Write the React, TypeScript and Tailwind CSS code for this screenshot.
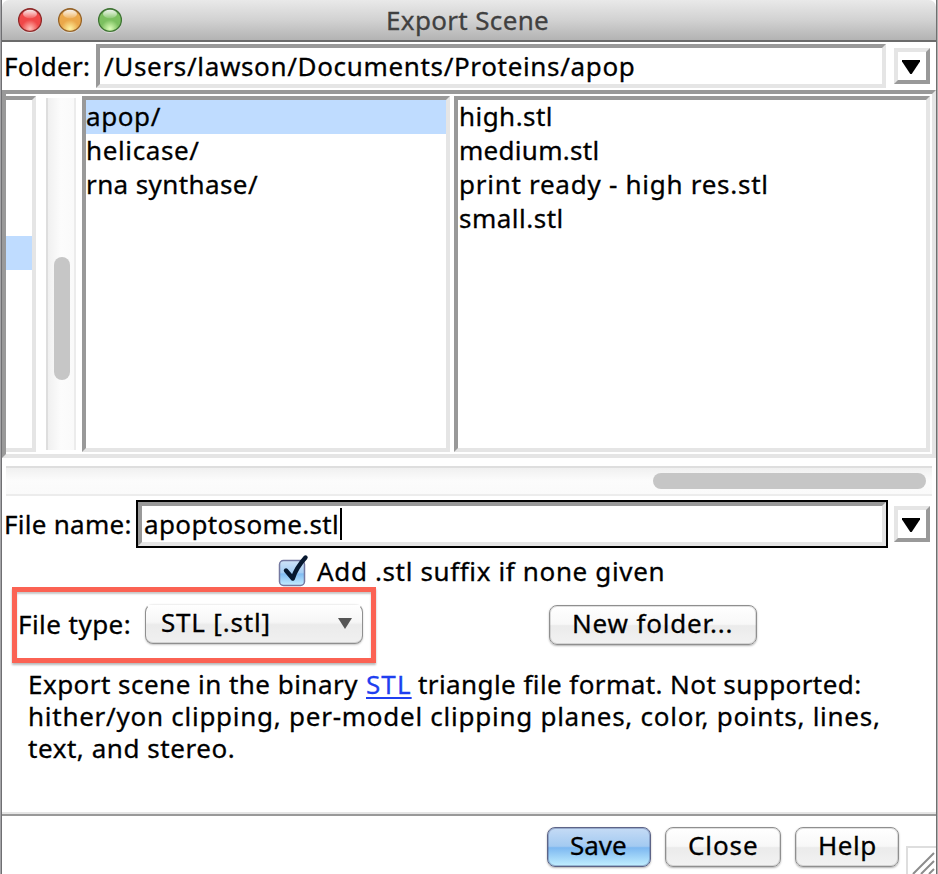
import type { ReactNode } from "react";

const sunken = "border-4 border-t-[#999] border-l-[#999] border-r-[#e5e5e5] border-b-[#e5e5e5] bg-white";

function Light({ id, dark, mid, glow }: { id: string; dark: string; mid: string; glow: string }) {
  return (
    <svg width="26" height="26" viewBox="0 0 26 26">
      <defs>
        <radialGradient id={id} cx="50%" cy="88%" r="85%">
          <stop offset="0" stopColor={glow} />
          <stop offset="0.45" stopColor={mid} />
          <stop offset="0.85" stopColor={mid} />
          <stop offset="1" stopColor={dark} />
        </radialGradient>
        <linearGradient id={id + "s"} x1="0" y1="0" x2="0" y2="1">
          <stop offset="0" stopColor="#fff" stopOpacity="0.9" />
          <stop offset="1" stopColor="#fff" stopOpacity="0.15" />
        </linearGradient>
      </defs>
      <circle cx="13" cy="14" r="12" fill="#fff" opacity="0.4" />
      <circle cx="13" cy="13" r="11.4" fill={`url(#${id})`} stroke={dark} strokeWidth="1.3" />
      <ellipse cx="13" cy="7" rx="7" ry="4.2" fill={`url(#${id}s)`} />
    </svg>
  );
}

function ArrowButton({ className }: { className: string }) {
  return (
    <button
      className={
        "flex h-9 w-9 shrink-0 items-start border-4 border-t-[#e5e5e5] border-l-[#e5e5e5] border-r-[#999] border-b-[#999] bg-white pt-2 pl-1 " +
        className
      }
    >
      <svg width="18" height="14" viewBox="0 0 18 14" className="shrink-0">
        <path d="M0 0H18V1.5L9.7 14H8.3L0 1.5Z" fill="#000" />
      </svg>
    </button>
  );
}

function Row({ children, className = "" }: { children?: ReactNode; className?: string }) {
  return <div className={"h-[34px] leading-[32px] whitespace-pre " + className}>{children}</div>;
}

function PushButton({ children, className }: { children: ReactNode; className: string }) {
  return (
    <button
      className={
        "shrink-0 rounded-[8px] border text-left leading-[33px] whitespace-pre pb-[3px] " + className
      }
    >
      {children}
    </button>
  );
}

const plain =
  "border-[#8f8f8f] bg-[linear-gradient(#ffffff_0%,#f8f8f8_48%,#ebebeb_52%,#f2f2f2_100%)] shadow-[inset_0_0_0_1px_rgba(0,0,0,0.12),0_1px_2px_rgba(0,0,0,0.3)]";

export default function App() {
  return (
    <div className="flex h-[874px] w-[938px] overflow-hidden bg-white font-['Noto_Sans',sans-serif] text-[26px] text-black [-webkit-text-stroke:0.3px]">
      <div className="w-[2px] shrink-0 bg-[linear-gradient(90deg,#a5a5a8_50%,#6f6f72_50%)]" />

      <div className="flex w-[934px] shrink-0 flex-col">
        <header className="flex h-[42px] shrink-0 rounded-t-[7px] border-b-2 border-[#6b6b6b] bg-[linear-gradient(#e9e9e9,#d2d2d2_50%,#b3b3b3)] pt-[7px] pl-[15px]">
          <div className="flex w-[369px] shrink-0 gap-[14px]">
            <Light id="red" dark="#8f2a2a" mid="#f04848" glow="#ffc0b8" />
            <Light id="amber" dark="#96642a" mid="#eba84a" glow="#fff3a0" />
            <Light id="green" dark="#3f7434" mid="#7cc060" glow="#dcffb8" />
          </div>
          <h1 className="-mt-px leading-[28px] tracking-[0.34px] text-[#404040]">Export Scene</h1>
        </header>

        <div className="flex h-12 shrink-0">
          <label className="w-[94px] shrink-0 pl-[2px] leading-[49px] tracking-[0.28px]">Folder:</label>
          <div className={"mt-[2px] h-11 w-[790px] shrink-0 pl-1 leading-[37px] tracking-[0.66px] " + sunken}>
            /Users/lawson/Documents/Proteins/apop
          </div>
          <ArrowButton className="mt-[6px] ml-2" />
        </div>

        <section className={"flex h-[368px] w-full shrink-0 pt-[2px] " + sunken}>
          <div className="h-[356px] w-[30px] shrink-0 border-y-4 border-r-4 border-t-[#999] border-r-[#e5e5e5] border-b-[#e5e5e5]">
            <div className="mt-[136px] h-[34px] bg-[#bfdcff]" />
          </div>
          <div className="mt-[2px] ml-[10px] h-[352px] w-[30px] shrink-0 border-x-2 border-l-[#dedede] border-r-[#ececec] bg-[linear-gradient(90deg,#f0f0f0,#fcfcfc_50%,#fafafa)] pt-[159px] pl-[6px]">
            <div className="h-[123px] w-4 rounded-full bg-[#c6c6c6]" />
          </div>
          <div className={"ml-[6px] h-[356px] w-[368px] shrink-0 " + sunken}>
            <Row className="bg-[#bfdcff] tracking-[0.6px]">apop/</Row>
            <Row className="tracking-[0.62px]">helicase/</Row>
            <Row className="tracking-[0.4px]">rna synthase/</Row>
          </div>
          <div className={"ml-[4px] h-[356px] w-[476px] shrink-0 " + sunken}>
            <Row className="pl-px tracking-[0.45px]">high.stl</Row>
            <Row className="pl-px tracking-[0.3px]">medium.stl</Row>
            <Row className="pl-px tracking-[0.73px]">print ready - high res.stl</Row>
            <Row className="pl-px tracking-[0.5px]">small.stl</Row>
          </div>
        </section>

        <div className="mt-2 ml-1 flex h-[30px] w-[926px] shrink-0 justify-end border-y-2 border-t-[#dedede] border-b-[#ececec] bg-[linear-gradient(#f0f0f0,#fcfcfc_50%,#fafafa)] pt-[5px] pr-[6px]">
          <div className="h-4 w-[273px] rounded-full bg-[#c6c6c6]" />
        </div>

        <div className="mt-1 flex h-12 shrink-0">
          <label className="w-[134px] shrink-0 pl-[2px] leading-[49px] tracking-[0.28px]">File name:</label>
          <div className="w-[752px] shrink-0 border-2 border-black">
            <div className={"flex h-11 items-start pl-[2px] " + sunken}>
              <span className="leading-[37px] tracking-[0.36px]">apoptosome.stl</span>
              <span className="ml-px mt-[2px] h-8 w-[2px] bg-black" />
            </div>
          </div>
          <ArrowButton className="mt-[6px] ml-[6px]" />
        </div>

        <div className="flex h-[39px] shrink-0 pl-[275px]">
          <svg width="34" height="34" viewBox="0 0 34 34" className="mt-[5px] shrink-0 overflow-visible">
            <defs>
              <linearGradient id="check" x1="0" y1="0" x2="0" y2="1">
                <stop offset="0" stopColor="#cfe2f7" />
                <stop offset="0.48" stopColor="#a5cef4" />
                <stop offset="0.54" stopColor="#82bdf3" />
                <stop offset="1" stopColor="#c5edff" />
              </linearGradient>
            </defs>
            <rect x="2.5" y="7.5" width="25" height="25" rx="4" fill="url(#check)" stroke="#7478a0" strokeWidth="1.5" />
            <path d="M9 17.5L15.8 25.5Q19 15 28.5 4.5" fill="none" stroke="#07182f" strokeWidth="4.4" strokeLinecap="round" strokeLinejoin="round" />
          </svg>
          <span className="ml-[6px] leading-[46px] tracking-[0.64px]">Add .stl suffix if none given</span>
        </div>

        <div className="flex h-[78px] shrink-0 pl-[10px]">
          <div className="flex h-[76px] w-[364px] shrink-0 border-[5px] border-[#fb6253] pt-[12px] shadow-[0_2px_2px_rgba(0,0,0,0.28),inset_0_2px_2px_rgba(0,0,0,0.22)]">
            <label className="w-[128px] shrink-0 pl-px leading-[40px] tracking-[0.45px]">File type:</label>
            <div className="flex h-10 w-[218px] shrink-0 rounded-[8px] border border-t-transparent border-r-[#8f8f8f] border-b-[#8f8f8f] border-l-[#8f8f8f] bg-[linear-gradient(#ffffff_0%,#f6f6f6_45%,#ebebeb_52%,#f0f0f0_100%)] pl-[15px] shadow-[inset_0_-1px_0_rgba(0,0,0,0.12),0_1px_2px_rgba(0,0,0,0.22)]">
              <span className="w-[177px] leading-[34px] tracking-[0.8px]">STL [.stl]</span>
              <svg width="14" height="11" viewBox="0 0 14 11" className="mt-[13px] shrink-0">
                <path d="M0 0H14L7 11Z" fill="#555" />
              </svg>
            </div>
          </div>
          <PushButton className={"mt-[18px] ml-[173px] h-10 w-[208px] pl-[22px] tracking-[0.82px] " + plain}>
            New folder...
          </PushButton>
        </div>

        <div className="h-[147px] shrink-0 pt-[3px] pl-[26px] leading-8 whitespace-pre">
          <p className="flex">
            <span className="w-[338px] tracking-[0.47px]">Export scene in the binary</span>
            <a className="w-[44px] tracking-[1.1px] text-[#1f3ff0] underline decoration-2 underline-offset-[3px]">STL</a>
            <span className="ml-[8px] tracking-[0.42px]">triangle file format. Not supported:</span>
          </p>
          <p className="tracking-[0.74px]">hither/yon clipping, per-model clipping planes, color, points, lines,</p>
          <p className="tracking-[0.55px]">text, and stereo.</p>
        </div>

        <div className="h-1 shrink-0 border-t-2 border-b-2 border-t-[#e5e5e5] border-b-[#999]" />

        <footer className="flex h-[58px] shrink-0 pt-[11px] pl-[545px]">
          <PushButton className="h-10 w-[104px] border-[#5d6487] bg-[linear-gradient(#c5dbf5_0%,#a3caf1_48%,#7db8f1_52%,#c2efff_100%)] pl-[22px] shadow-[inset_0_0_0_1px_rgba(70,80,130,0.35),0_1px_2px_rgba(0,0,0,0.3)]">
            Save
          </PushButton>
          <PushButton className={"ml-[14px] h-10 w-[116px] pl-[22px] tracking-[0.9px] " + plain}>Close</PushButton>
          <PushButton className={"ml-[14px] h-10 w-[104px] pl-[22px] tracking-[0.5px] " + plain}>Help</PushButton>
          <svg width="30" height="28" viewBox="0 0 30 28" className="mt-[19px] ml-[7px] shrink-0">
            <path d="M1 28V1H30" fill="none" stroke="#dedede" strokeWidth="2" />
            <path d="M7 28L28 7M15 28L28 15M23 28L28 23" stroke="#8c8c8c" strokeWidth="2" />
          </svg>
        </footer>
      </div>

      <div className="w-[2px] shrink-0 bg-[linear-gradient(90deg,#707070_50%,#b0b0b0_50%)]" />
    </div>
  );
}
